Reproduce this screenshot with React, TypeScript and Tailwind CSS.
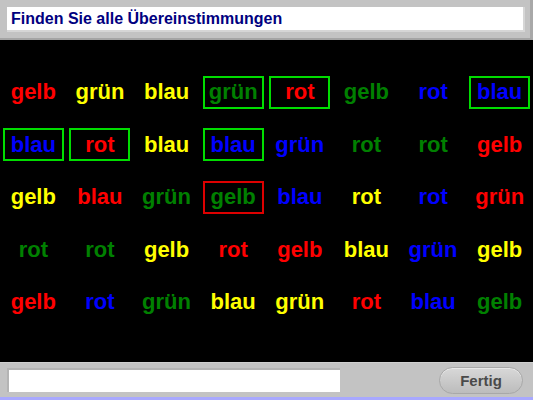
type Cell = { w: string; c: string; box?: "g" | "r" };

const R = "#ff0000";
const Y = "#ffff00";
const B = "#0000ff";
const G = "#008000";

const rows: Cell[][] = [
  [
    { w: "gelb", c: R },
    { w: "grün", c: Y },
    { w: "blau", c: Y },
    { w: "grün", c: G, box: "g" },
    { w: "rot", c: R, box: "g" },
    { w: "gelb", c: G },
    { w: "rot", c: B },
    { w: "blau", c: B, box: "g" },
  ],
  [
    { w: "blau", c: B, box: "g" },
    { w: "rot", c: R, box: "g" },
    { w: "blau", c: Y },
    { w: "blau", c: B, box: "g" },
    { w: "grün", c: B },
    { w: "rot", c: G },
    { w: "rot", c: G },
    { w: "gelb", c: R },
  ],
  [
    { w: "gelb", c: Y },
    { w: "blau", c: R },
    { w: "grün", c: G },
    { w: "gelb", c: G, box: "r" },
    { w: "blau", c: B },
    { w: "rot", c: Y },
    { w: "rot", c: B },
    { w: "grün", c: R },
  ],
  [
    { w: "rot", c: G },
    { w: "rot", c: G },
    { w: "gelb", c: Y },
    { w: "rot", c: R },
    { w: "gelb", c: R },
    { w: "blau", c: Y },
    { w: "grün", c: B },
    { w: "gelb", c: Y },
  ],
  [
    { w: "gelb", c: R },
    { w: "rot", c: B },
    { w: "grün", c: G },
    { w: "blau", c: Y },
    { w: "grün", c: Y },
    { w: "rot", c: R },
    { w: "blau", c: B },
    { w: "gelb", c: G },
  ],
];

export default function App() {
  return (
    <div
      className="w-[533px] h-[400px] flex flex-col bg-black overflow-hidden"
      style={{ fontFamily: '"Liberation Sans", Arial, sans-serif' }}
    >
      {/* header */}
      <div className="h-[40px] bg-[#c3c3c3] border-b-2 border-b-[#a4a4a4] border-r-[3px] border-r-[#a8a8a8] pt-[7px] pl-[7px] pr-[5px]">
        <div className="h-[25px] bg-white border-r-2 border-b-2 border-[#d6d6d6] pl-[4px] flex items-center">
          <span className="text-[16px] font-bold text-[#000080] leading-none">
            Finden Sie alle Übereinstimmungen
          </span>
        </div>
      </div>

      {/* board */}
      <div className="flex-1 pt-[26px]">
        {rows.map((row, i) => (
          <div key={i} className="grid grid-cols-8 h-[52.5px]">
            {row.map((cell, j) => (
              <div key={j} className="flex items-center justify-center">
                <div
                  className={
                    "w-[61px] h-[33px] flex items-center justify-center border-2 " +
                    (cell.box === "g"
                      ? "border-[#00dd00]"
                      : cell.box === "r"
                      ? "border-[#dd0000]"
                      : "border-transparent")
                  }
                >
                  <span
                    className="text-[22px] font-bold leading-none"
                    style={{ color: cell.c }}
                  >
                    {cell.w}
                  </span>
                </div>
              </div>
            ))}
          </div>
        ))}
      </div>

      {/* footer */}
      <div className="h-[38px] bg-[#c3c3c3] border-t border-t-[#d0d0d0] border-b-[3px] border-b-[#a8a8ff] flex items-center pl-[7px] pr-[10px]">
        <div className="w-[333px] h-[24px] bg-white border-l-2 border-t-2 border-[#b4b4b4]" />
        <div className="flex-1" />
        <button className="w-[84px] h-[27px] rounded-full border border-[#a8a8a8] bg-gradient-to-b from-[#d8d8d8] to-[#bcbcbc] shadow-[inset_0_1px_0_#e8e8e8] text-[15px] font-bold text-[#4a4a4a] leading-none">
          Fertig
        </button>
      </div>
    </div>
  );
}
